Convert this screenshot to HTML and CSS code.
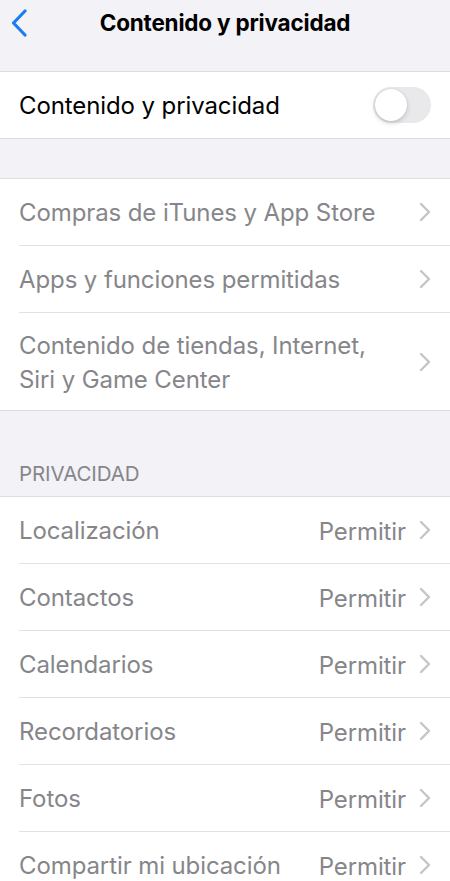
FILE: index.html
```html
<!DOCTYPE html>
<html lang="es">
<head>
<meta charset="utf-8">
<title>Contenido y privacidad</title>
<link rel="stylesheet" href="styles.css">
</head>
<body>
<header class="nav">
  <div class="nav-left">
    <svg class="back" width="18" height="28" viewBox="0 0 18 28" aria-hidden="true">
      <path d="M15 2 L3.5 14 L15 26" fill="none" stroke="#1b7cf6" stroke-width="3.2" stroke-linecap="round" stroke-linejoin="round"/>
    </svg>
  </div>
  <h1 class="title">Contenido y privacidad</h1>
  <div class="nav-right"></div>
</header>

<section class="group first">
  <div class="row">
    <div class="row-inner">
      <span class="label dark">Contenido y privacidad</span>
      <span class="switch"><span class="knob"></span></span>
    </div>
  </div>
</section>

<section class="group second">
  <div class="row">
    <div class="row-inner">
      <span class="label">Compras de iTunes y App Store</span>
      <svg class="chev" width="12" height="20" viewBox="0 0 12 20"><path d="M2 2 L10 10 L2 18" fill="none" stroke="#c5c5c8" stroke-width="2.4" stroke-linecap="round" stroke-linejoin="round"/></svg>
    </div>
  </div>
  <div class="row">
    <div class="row-inner">
      <span class="label">Apps y funciones permitidas</span>
      <svg class="chev" width="12" height="20" viewBox="0 0 12 20"><path d="M2 2 L10 10 L2 18" fill="none" stroke="#c5c5c8" stroke-width="2.4" stroke-linecap="round" stroke-linejoin="round"/></svg>
    </div>
  </div>
  <div class="row">
    <div class="row-inner tall">
      <span class="label">Contenido de tiendas, Internet,<br>Siri y Game Center</span>
      <svg class="chev" width="12" height="20" viewBox="0 0 12 20"><path d="M2 2 L10 10 L2 18" fill="none" stroke="#c5c5c8" stroke-width="2.4" stroke-linecap="round" stroke-linejoin="round"/></svg>
    </div>
  </div>
</section>

<div class="section-header">PRIVACIDAD</div>

<section class="group">
  <div class="row"><div class="row-inner"><span class="label">Localización</span><span class="value">Permitir</span><svg class="chev" width="12" height="20" viewBox="0 0 12 20"><path d="M2 2 L10 10 L2 18" fill="none" stroke="#c5c5c8" stroke-width="2.4" stroke-linecap="round" stroke-linejoin="round"/></svg></div></div>
  <div class="row"><div class="row-inner"><span class="label">Contactos</span><span class="value">Permitir</span><svg class="chev" width="12" height="20" viewBox="0 0 12 20"><path d="M2 2 L10 10 L2 18" fill="none" stroke="#c5c5c8" stroke-width="2.4" stroke-linecap="round" stroke-linejoin="round"/></svg></div></div>
  <div class="row"><div class="row-inner"><span class="label">Calendarios</span><span class="value">Permitir</span><svg class="chev" width="12" height="20" viewBox="0 0 12 20"><path d="M2 2 L10 10 L2 18" fill="none" stroke="#c5c5c8" stroke-width="2.4" stroke-linecap="round" stroke-linejoin="round"/></svg></div></div>
  <div class="row"><div class="row-inner"><span class="label">Recordatorios</span><span class="value">Permitir</span><svg class="chev" width="12" height="20" viewBox="0 0 12 20"><path d="M2 2 L10 10 L2 18" fill="none" stroke="#c5c5c8" stroke-width="2.4" stroke-linecap="round" stroke-linejoin="round"/></svg></div></div>
  <div class="row"><div class="row-inner"><span class="label">Fotos</span><span class="value">Permitir</span><svg class="chev" width="12" height="20" viewBox="0 0 12 20"><path d="M2 2 L10 10 L2 18" fill="none" stroke="#c5c5c8" stroke-width="2.4" stroke-linecap="round" stroke-linejoin="round"/></svg></div></div>
  <div class="row"><div class="row-inner"><span class="label">Compartir mi ubicación</span><span class="value">Permitir</span><svg class="chev" width="12" height="20" viewBox="0 0 12 20"><path d="M2 2 L10 10 L2 18" fill="none" stroke="#c5c5c8" stroke-width="2.4" stroke-linecap="round" stroke-linejoin="round"/></svg></div></div>
</section>
</body>
</html>
```

FILE: styles.css
```css
* { box-sizing: border-box; }

html, body {
  margin: 0;
  padding: 0;
  background: #f2f2f7;
  font-family: Inter, "Noto Sans", "Liberation Sans", sans-serif;
  -webkit-font-smoothing: antialiased;
  overflow: hidden;
}

.nav {
  height: 71px;
  display: grid;
  grid-template-columns: 1fr auto 1fr;
  align-items: start;
  padding-top: 9px;
}

.nav-left {
  padding-left: 10px;
  display: flex;
  align-items: center;
  height: 28px;
}

.back { display: block; }

.title {
  margin: 0;
  font-size: 22.5px;
  line-height: 28px;
  font-weight: 700;
  color: #000;
  letter-spacing: -0.2px;
}

.group {
  background: #fff;
  border-top: 1px solid #dedee1;
  border-bottom: 1px solid #dedee1;
}

.group.first { margin-bottom: 39px; }

.row { padding-left: 19px; }

.row-inner {
  display: flex;
  align-items: center;
  min-height: 67px;
  padding-right: 19px;
  padding-top: 2px;
  border-bottom: 1px solid #e2e2e5;
}

.row:last-child .row-inner { border-bottom: none; }
.group .row:last-child .row-inner { min-height: 66px; }
.group.first .row-inner { min-height: 65px; }

.row-inner.tall { min-height: 97px; }
.group .row:last-child .row-inner.tall { min-height: 97px; }

.label {
  flex: 1;
  font-size: 24px;
  line-height: 34px;
  color: #86868a;
  letter-spacing: -0.1px;
}

.label.dark { color: #000; }

.value {
  font-size: 24px;
  color: #86868a;
  margin-right: 13px;
  letter-spacing: -0.1px;
}

.chev { display: block; flex: none; margin-top: -2px; }

.switch {
  width: 58px;
  height: 36px;
  border-radius: 18px;
  background: #e9e9eb;
  display: flex;
  align-items: center;
  padding-left: 2px;
  margin-top: -2px;
}

.knob {
  width: 32px;
  height: 32px;
  border-radius: 50%;
  background: #fff;
  box-shadow: 0 2px 5px rgba(0,0,0,0.18), 0 0 1px rgba(0,0,0,0.15);
}

.section-header {
  height: 85px;
  display: flex;
  align-items: flex-end;
  padding: 0 19px 10px;
  font-size: 20.5px;
  color: #86868a;
  letter-spacing: -0.1px;
}
```
